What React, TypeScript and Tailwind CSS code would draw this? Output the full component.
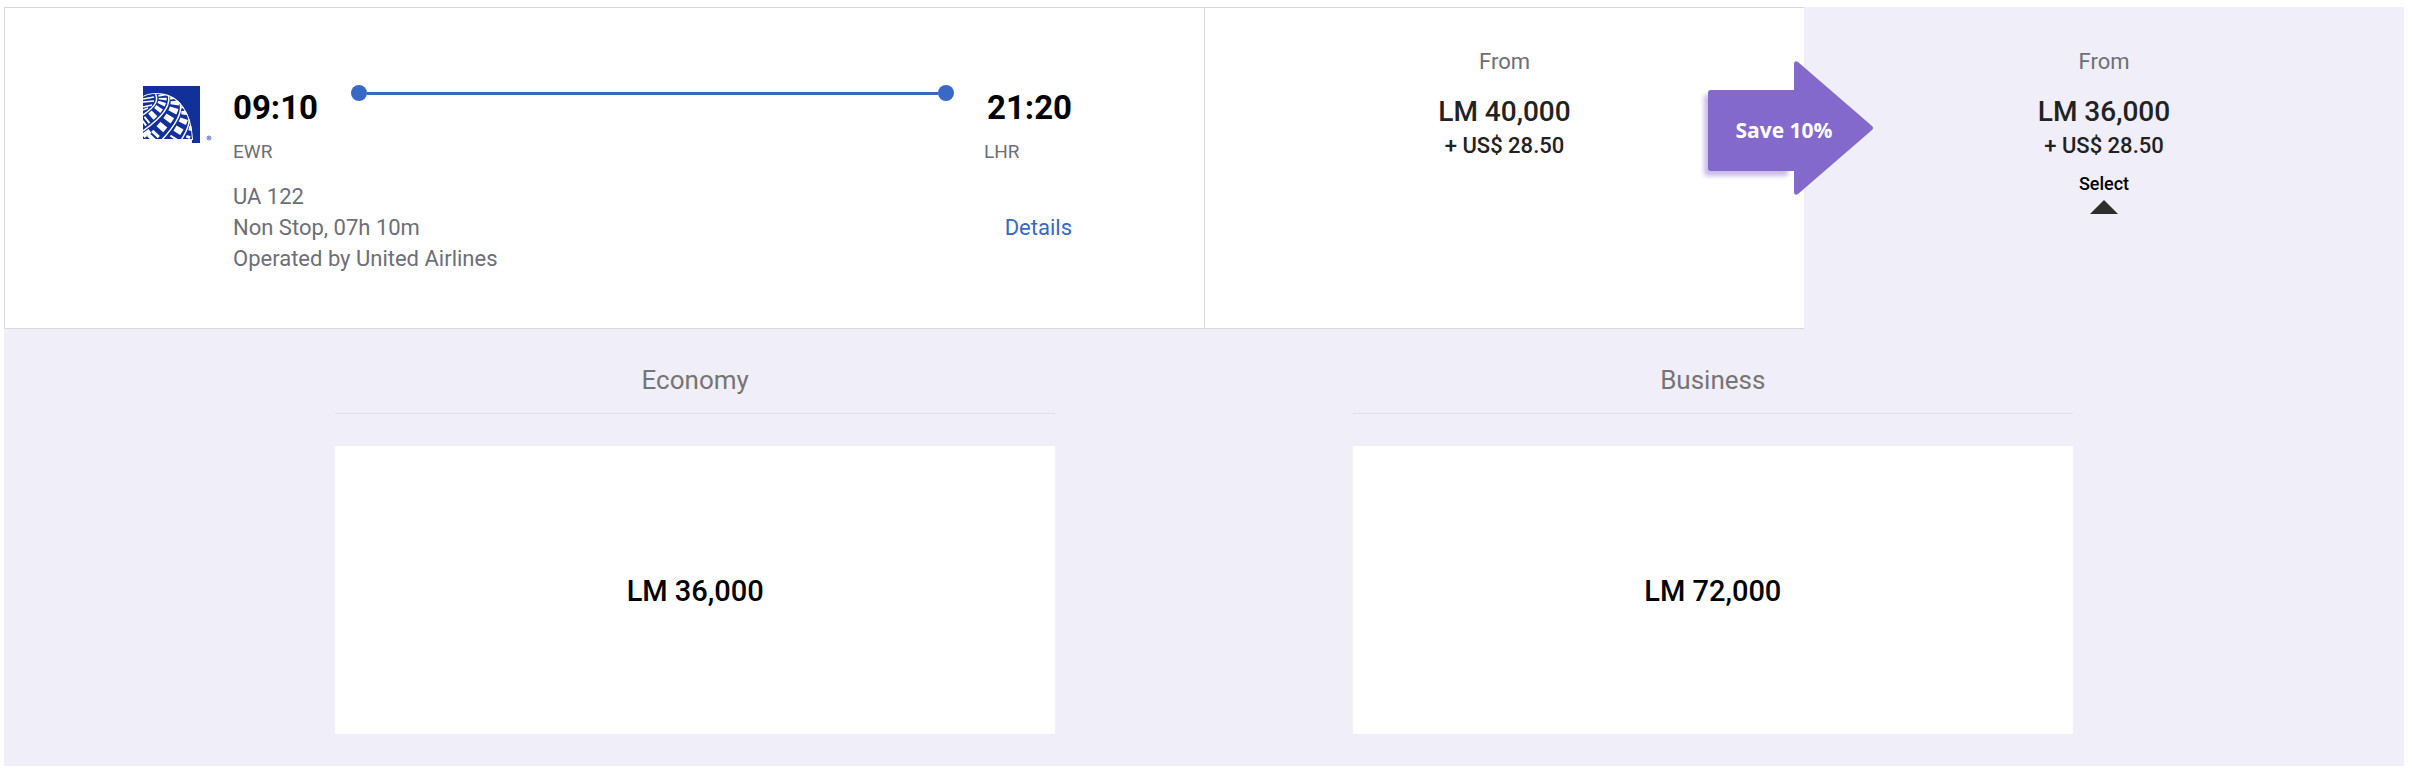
import { useState } from "react";

const cabins = [
  { name: "Economy", miles: "LM 36,000" },
  { name: "Business", miles: "LM 72,000" },
];

const AirlineLogo = () => (
  <svg
    role="img"
    aria-label="United Airlines"
    className="w-[70px] h-[57px] shrink-0"
    viewBox="0 0 70 57"
    fill="none"
  >
    <path d="M0 0h57v57h-8v-3H0z" fill="#12309a" />
    <clipPath id="globe">
      <path d="M0 10C5 7 14 6 22 8C36 11 49 26 50 54H0z" />
    </clipPath>
    {/* meridians, then the checkered bands between them */}
    <g clipPath="url(#globe)" stroke="#fff">
      <path d="M0 10C5 7 14 6 22 8C36 11 49 26 50 54" strokeWidth="2" />
      <path d="M12 7C16 14 13 20 0 29" strokeWidth="1.5" />
      <path d="M25 8C29 20 18 32 0 45" strokeWidth="1.5" />
      <path d="M36 13C42 26 31 41 17 56" strokeWidth="1.5" />
      <path d="M45 23C49 35 44 45 37 56" strokeWidth="1.5" />
      <path d="M0 13L11 11M0 16L11 15M0 21L9 19M0 24L5 22" strokeWidth="1.6" />
      <path
        d="M19 8C22 17 15 26 0 37"
        strokeWidth="8"
        strokeDasharray="2 2 2 2 3 3 4 4 5 4"
      />
      <path
        d="M31 10C36 23 24 36 5 56"
        strokeWidth="9"
        strokeDasharray="3 2 4 3 5 4 6 5 6 5"
      />
      <path
        d="M41 18C46 31 37 41 27 58"
        strokeWidth="8"
        strokeDasharray="2 3 4 4 5 5 6 5"
        strokeDashoffset="-2"
      />
      <path
        d="M48 30C50 40 47 46 43 57"
        strokeWidth="4"
        strokeDasharray="3 4 5 5"
        strokeDashoffset="-3"
      />
      <path d="M0 50L7 45" strokeWidth="5" />
      <path d="M0 54H50" strokeWidth="2" />
    </g>
    <circle cx="66" cy="52" r="2" stroke="#12309a" strokeWidth=".6" />
    <path d="M65.5 53v-2h1l-.5 1l.7 1" stroke="#12309a" strokeWidth=".5" />
  </svg>
);

const SaveArrow = () => (
  <div className="absolute top-[52px] -left-[104px] w-[176px] h-[140px]">
    <svg className="w-full h-full" viewBox="0 0 176 140" fill="none">
      <path
        d="M4 36h84v78q0 3-3 3H7q-3 0-3-3z"
        fill="#cbbbea"
        className="blur-[2px]"
      />
      <path
        d="M9 31h85V5q0-4 4-2L172 67q2 2 0 4L98 135q-4 2-4-2V112H11q-3 0-3-3V34q0-3 3-3z"
        fill="#8369cc"
      />
    </svg>
    <span
      className="absolute inset-y-0 left-0 w-[168px] pt-1 flex items-center justify-center
      font-['Open_Sans',sans-serif] text-[21px] font-bold text-white whitespace-nowrap"
    >
      Save 10%
    </span>
  </div>
);

const Fare = ({ miles, cash }: { miles: string; cash: string }) => (
  <>
    <span className="text-[22px] leading-8 text-[#6d6e78]">From</span>
    <span className="mt-4 text-[28px] leading-9 font-medium text-[#222]">
      {miles}
    </span>
    <span className="text-[22px] leading-8 font-medium text-[#222]">
      {cash}
    </span>
  </>
);

const App = () => {
  const [isOpen, setIsOpen] = useState(true);

  return (
    <main className="min-h-screen bg-white pl-1 pr-2 pt-[7px] pb-3 font-[Roboto,sans-serif]">
      <div className="bg-[#f0eef8]">
        <section className="flex min-h-[322px]">
          {/* flight */}
          <div className="flex w-1/2 border border-r-0 border-[#d9d9d9] bg-white pl-[138px] pr-[132px] pt-[78px]">
            <AirlineLogo />
            <div className="ml-5 flex-1">
              <div className="flex">
                <div className="w-[88px]">
                  <div className="text-[33px] leading-[44px] font-bold text-black">
                    09:10
                  </div>
                  <div className="text-[19px] leading-[44px] text-[#6d6e78]">
                    EWR
                  </div>
                </div>
                <div className="mx-[30px] flex h-[14px] flex-1 items-center">
                  <span className="size-4 rounded-full bg-[#3869c4]" />
                  <span className="h-[3px] flex-1 bg-[#3869c4]" />
                  <span className="size-4 rounded-full bg-[#3869c4]" />
                </div>
                <div className="w-[88px]">
                  <div className="text-right text-[33px] leading-[44px] font-bold text-black">
                    21:20
                  </div>
                  <div className="text-[19px] leading-[44px] text-[#6d6e78]">
                    LHR
                  </div>
                </div>
              </div>
              <div className="mt-[7px] flex items-center justify-between text-[22px] leading-[31px] text-[#6d6e78]">
                <div>
                  <p>UA 122</p>
                  <p>Non Stop, 07h 10m</p>
                  <p>Operated by United Airlines</p>
                </div>
                <a href="#details" className="text-[#3869c4]">
                  Details
                </a>
              </div>
            </div>
          </div>

          {/* regular fare */}
          <div className="flex w-1/4 flex-col items-center border-y border-l border-[#d9d9d9] bg-white pt-[38px]">
            <Fare miles="LM 40,000" cash="+ US$ 28.50" />
          </div>

          {/* discounted fare */}
          <div className="relative flex w-1/4 flex-col items-center pt-[39px]">
            <SaveArrow />
            <Fare miles="LM 36,000" cash="+ US$ 28.50" />
            <button
              type="button"
              aria-expanded={isOpen}
              onClick={() => setIsOpen(!isOpen)}
              className="mt-2 flex cursor-pointer flex-col items-center text-[18px] leading-7 font-medium text-black"
            >
              Select
              <svg
                className={isOpen ? "mt-[2px] h-[14px] w-7" : "mt-[2px] h-[14px] w-7 rotate-180"}
                viewBox="0 0 28 14"
              >
                <path d="M14 0L28 14H0z" fill="#2d2d2d" />
              </svg>
            </button>
          </div>
        </section>

        {/* cabins */}
        {isOpen && (
          <section className="flex justify-center gap-[12.4%] pt-[33px] pb-8">
            {cabins.map((cabin) => (
              <div key={cabin.name} className="w-[30%]">
                <h2 className="border-b border-[#e1dfe6] pb-[15px] text-center text-[26px] leading-9 text-[#757575]">
                  {cabin.name}
                </h2>
                <button
                  type="button"
                  className="mt-8 h-72 w-full cursor-pointer bg-white pt-1 text-[29px] font-medium text-black"
                >
                  {cabin.miles}
                </button>
              </div>
            ))}
          </section>
        )}
      </div>
    </main>
  );
};

export default App;
